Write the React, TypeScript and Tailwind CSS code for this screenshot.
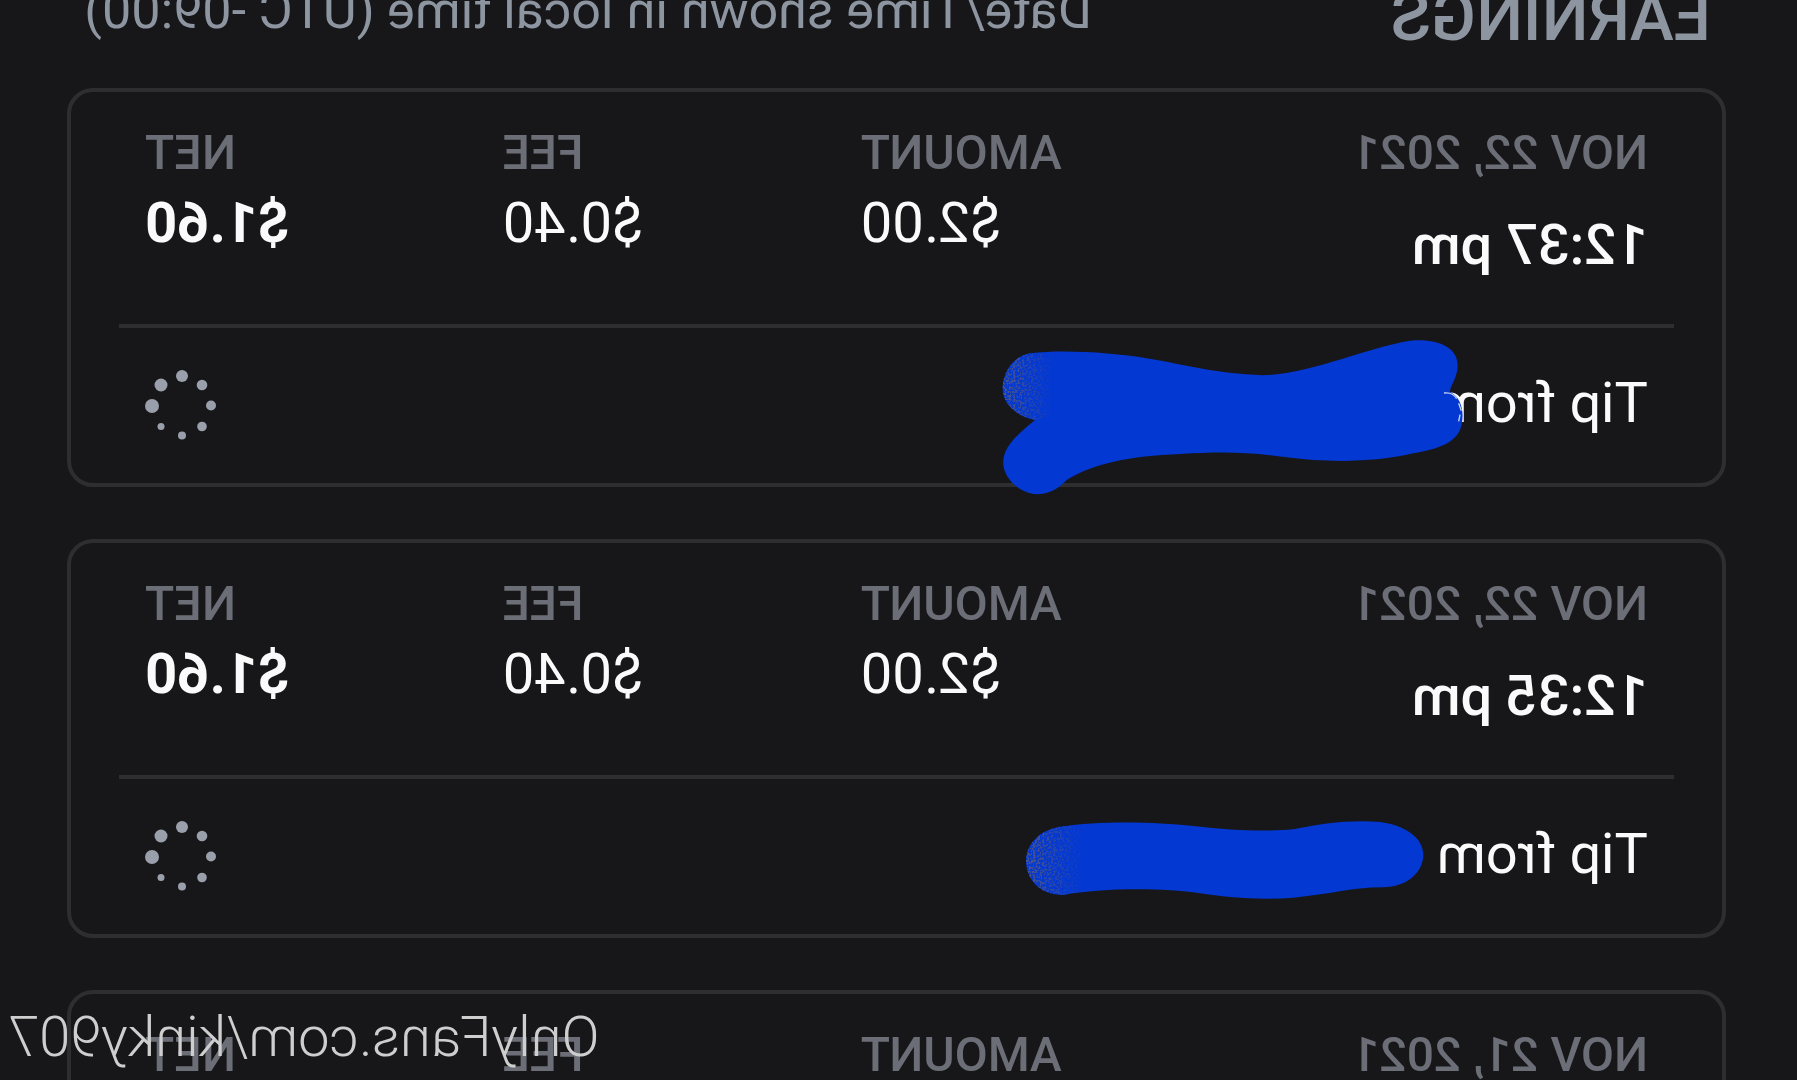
import React from 'react';

type Earning = {
  id: number;
  date: string;
  time: string;
  amount: string;
  fee: string;
  net: string;
  cover: React.ReactNode;
};

const SPINNER_DOTS = [
  { cx: 65, cy: 36, r: 7 },
  { cx: 56, cy: 15, r: 6.5 },
  { cx: 35, cy: 6, r: 6 },
  { cx: 15, cy: 15, r: 5.3 },
  { cx: 6, cy: 35.5, r: 5 },
  { cx: 15, cy: 56.5, r: 4.8 },
  { cx: 35, cy: 65.5, r: 4 },
  { cx: 56, cy: 56.5, r: 3.5 },
];

function Spinner() {
  return (
    <svg className="h-[72px] w-[72px] shrink-0" viewBox="0 0 72 72" fill="#9a9fac" aria-hidden="true">
      {SPINNER_DOTS.map((dot, index) => (
        <circle key={index} cx={dot.cx} cy={dot.cy} r={dot.r} />
      ))}
    </svg>
  );
}

/* Speckled end of a brush stroke */
function Grain({ id }: { id: string }) {
  return (
    <defs>
      <filter id={`${id}-grain`} x="0" y="0" width="1" height="1">
        <feTurbulence type="fractalNoise" baseFrequency="0.15" numOctaves="2" seed="4" result="noise" />
        <feColorMatrix in="noise" type="matrix" values="0 0 0 0 0.09  0 0 0 0 0.1  0 0 0 0 0.2  7 0 0 0 -3.2" result="specks" />
        <feComposite in="specks" in2="SourceGraphic" operator="in" />
      </filter>
      <linearGradient id={`${id}-fade`} x1="0" x2="1" y1="0" y2="0">
        <stop offset="0" stopColor="#fff" stopOpacity="0.9" />
        <stop offset="1" stopColor="#fff" stopOpacity="0" />
      </linearGradient>
    </defs>
  );
}

function WideStroke() {
  return (
    <svg className="absolute top-[228px] left-[242px] h-[190px] w-[500px]" viewBox="0 0 1500 570" aria-hidden="true">
      <Grain id="wide" />
      <g transform="translate(1500 0) scale(-1 1)">
        <path
          fill="#0338d2"
          d="M150 100C250 88 400 98 500 115C620 135 700 160 850 166C1000 160 1150 85 1290 62C1380 55 1435 85 1433 140C1430 180 1410 195 1410 215C1450 235 1455 290 1440 330C1420 370 1380 385 1300 400C1200 425 1050 430 920 412C800 395 720 395 600 402C450 408 340 430 260 480C230 515 190 525 160 522C100 510 65 460 70 420C75 370 130 330 165 300C110 290 65 250 68 200C72 150 100 110 150 100Z"
        />
        <path
          fill="url(#wide-fade)"
          filter="url(#wide-grain)"
          d="M150 100L220 98L220 285L165 300C110 290 65 250 68 200C72 150 100 110 150 100Z"
        />
        <path
          fill="none"
          stroke="#c9d4f5"
          strokeWidth="4"
          d="M1392 219Q1418 216 1430 236M1436 250L1444 272M1440 284L1436 304"
        />
      </g>
    </svg>
  );
}

function ShortStroke() {
  return (
    <svg className="absolute top-[257px] left-[272px] h-[120px] w-[450px]" viewBox="0 0 1350 360" aria-hidden="true">
      <Grain id="short" />
      <g transform="translate(1350 0) scale(-1 1)">
        <path
          fill="#0338d2"
          d="M180 80C300 62 460 65 580 78C700 92 800 95 880 88C960 70 1060 58 1140 66C1210 75 1270 110 1270 165C1268 220 1220 260 1150 262C1050 262 980 285 880 293C780 300 700 295 600 280C480 262 300 265 190 285C120 285 78 240 78 180C80 130 120 90 180 80Z"
        />
        <path
          fill="url(#short-fade)"
          filter="url(#short-grain)"
          d="M180 80L250 72L250 274L190 285C120 285 78 240 78 180C80 130 120 90 180 80Z"
        />
      </g>
    </svg>
  );
}

const EARNINGS: Earning[] = [
  { id: 1, date: 'NOV 22, 2021', time: '12:37 pm', amount: '$2.00', fee: '$0.40', net: '$1.60', cover: <WideStroke /> },
  { id: 2, date: 'NOV 22, 2021', time: '12:35 pm', amount: '$2.00', fee: '$0.40', net: '$1.60', cover: <ShortStroke /> },
  { id: 3, date: 'NOV 21, 2021', time: '', amount: '', fee: '', net: '', cover: null },
];

function Figure({ label, value, strong }: { label: string; value: string; strong?: boolean }) {
  return (
    <div className="flex flex-col gap-2.5 text-right">
      <dt className="text-5xl leading-14 font-medium text-[#6b6e76]">{label}</dt>
      <dd className={strong ? 'text-[56px] leading-16 font-bold' : 'text-[56px] leading-16'}>{value}</dd>
    </div>
  );
}

function EarningCard({ item }: { item: Earning }) {
  return (
    <li className="relative rounded-[26px] border-4 border-[#2e2e30] px-12">
      <div className="grid grid-cols-[6fr_5fr_5fr_5fr] border-b-4 border-[#2e2e30] px-[26px] pt-[33px] pb-[47px]">
        <div className="flex flex-col gap-8 whitespace-nowrap">
          <p className="text-5xl leading-14 font-medium text-[#6b6e76]">{item.date}</p>
          <p className="min-h-16 text-[56px] leading-16 font-medium">{item.time}</p>
        </div>
        <dl className="contents">
          <Figure label="AMOUNT" value={item.amount} />
          <Figure label="FEE" value={item.fee} />
          <Figure label="NET" value={item.net} strong />
        </dl>
      </div>
      <div className="flex items-center justify-between px-[26px] py-10">
        <p className="pb-1 text-[56px] leading-[71px]">Tip from</p>
        <Spinner />
      </div>
      {item.cover}
    </li>
  );
}

export default function App() {
  return (
    <div className="relative h-screen -scale-x-100 overflow-hidden bg-[#171719] font-[Roboto,sans-serif] text-[#fafafa]">
      <header className="-mt-3.5 flex items-start justify-between pr-[84px] pl-[86px] whitespace-nowrap text-[#8d95a1]">
        <h1 className="text-[66px] leading-16 font-medium">EARNINGS</h1>
        <p className="text-[52px] leading-[50px]">Date/Time shown in local time (UTC -09:00)</p>
      </header>

      <ul className="mt-[38px] flex flex-col gap-[52px] pr-[67px] pl-[71px]">
        {EARNINGS.map((item) => (
          <EarningCard key={item.id} item={item} />
        ))}
      </ul>

      <p className="absolute right-2 bottom-[11px] text-[56px] leading-16 font-light text-[#cececf]">
        OnlyFans.com/kinky907
      </p>
    </div>
  );
}
